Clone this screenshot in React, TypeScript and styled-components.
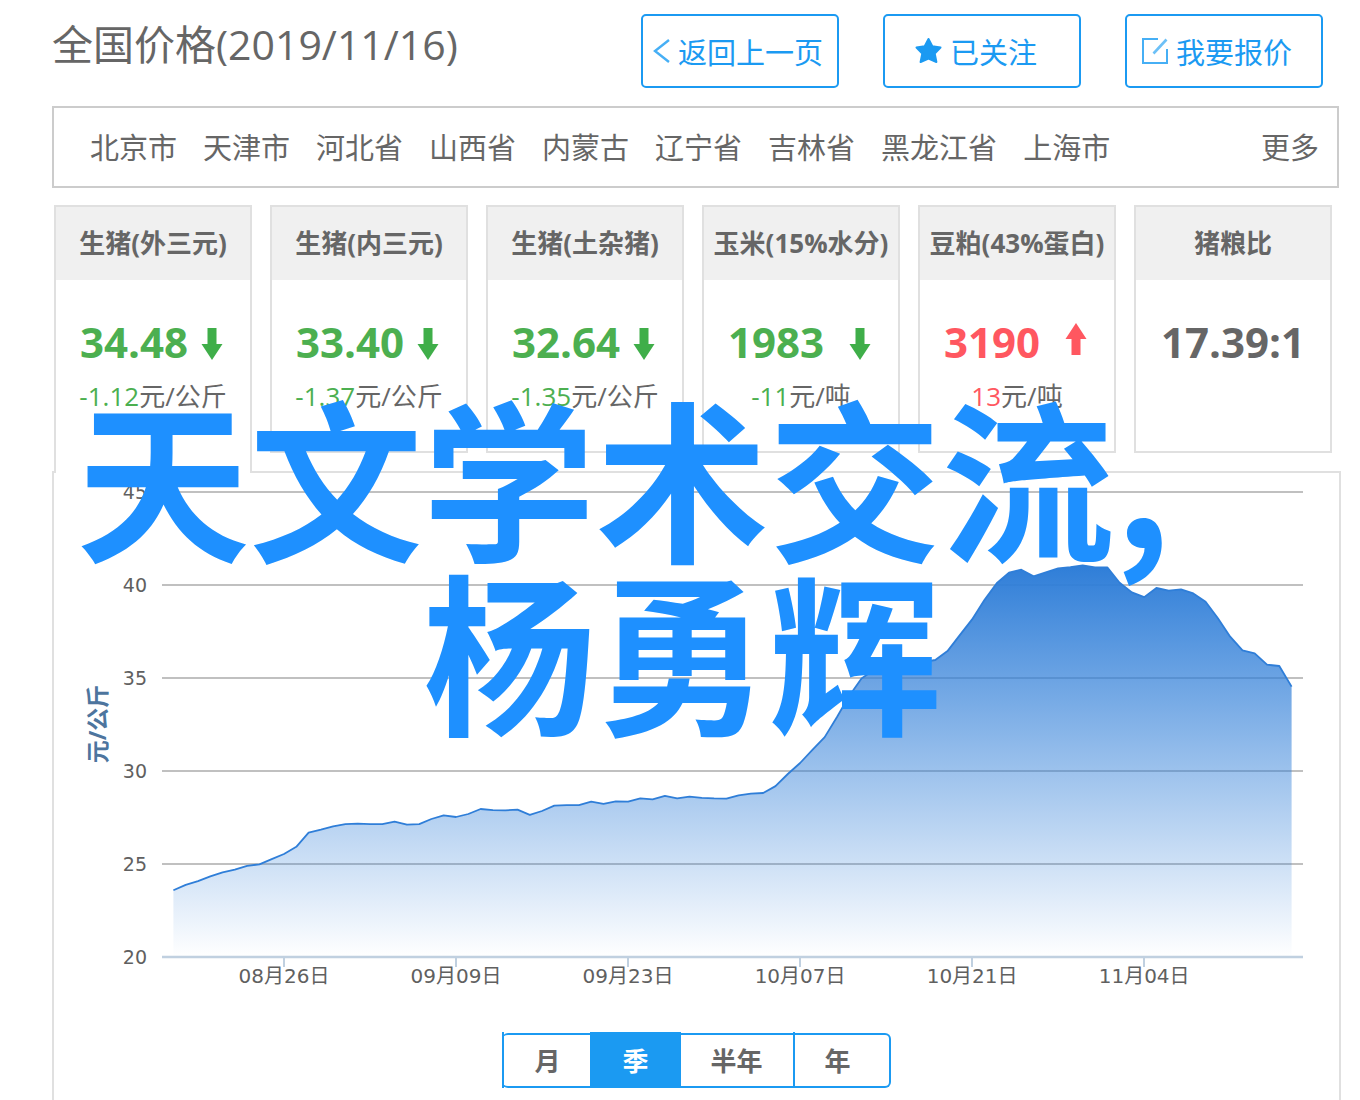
import React, { useState } from 'react';
import styled, { createGlobalStyle } from 'styled-components';

const BLUE = '#1b9af2';
const GREEN = '#4caf50';
const RED = '#ff5760';
const TEXT = '#666666';

const GlobalStyle = createGlobalStyle`
  * { box-sizing: border-box; }
  body {
    margin: 0;
    background: #fff;
    color: ${TEXT};
    font-family: 'Open Sans', 'Noto Sans CJK SC', sans-serif;
  }
  button { font-family: inherit; cursor: pointer; }
  a { color: inherit; text-decoration: none; }
`;

const Page = styled.div`
  position: relative;
  display: flex;
  flex-direction: column;
  min-height: 100vh;
  padding: 14px 19px 0 52px;
`;

const Header = styled.header`
  display: flex;
  justify-content: space-between;
  align-items: flex-start;
  padding-right: 18px;
`;

const Title = styled.h1`
  margin: 0;
  font-size: 41px;
  line-height: 60px;
  font-weight: 400;
  white-space: nowrap;
`;

const Actions = styled.div`
  display: flex;
  gap: 44px;
`;

const ActionButton = styled.button<{ $inset: number }>`
  display: flex;
  align-items: center;
  gap: 8px;
  width: 198px;
  height: 74px;
  padding: 0 0 0 ${(p) => p.$inset}px;
  border: 2px solid ${BLUE};
  border-radius: 5px;
  background: #fff;
  color: ${BLUE};
  font-size: 29px;
  white-space: nowrap;
`;

const Provinces = styled.nav`
  display: flex;
  align-items: center;
  gap: 26px;
  height: 82px;
  margin: 18px 2px 0 0;
  padding: 0 18px 2px 36px;
  border: 2px solid #cccccc;
  font-size: 29px;
  white-space: nowrap;
`;

const More = styled.a`
  margin-left: auto;
`;

const Cards = styled.section`
  display: grid;
  grid-template-columns: repeat(6, 1fr);
  gap: 18px;
  margin-top: 17px;
  padding: 0 9px 18px 2px;
`;

const Card = styled.article<{ $active?: boolean }>`
  position: relative;
  z-index: 1;
  min-height: 248px;
  margin-bottom: ${(p) => (p.$active ? '-20px' : '0')};
  border: 2px solid #e0e0e0;
  border-bottom-width: ${(p) => (p.$active ? '0' : '2px')};
  background: #fff;
`;

const CardTitle = styled.h2`
  margin: 0 0 30px;
  background: #f0f0f0;
  font-size: 26px;
  line-height: 73px;
  font-weight: 700;
  text-align: center;
  white-space: nowrap;
`;

const Price = styled.div<{ $color: string; $center?: boolean }>`
  display: flex;
  align-items: center;
  justify-content: ${(p) => (p.$center ? 'center' : 'space-between')};
  padding: ${(p) => (p.$center ? '0' : '0 27px 0 24px')};
  color: ${(p) => p.$color};
  font-size: 42px;
  line-height: 64px;
  font-weight: 700;
`;

const Change = styled.div`
  font-size: 26px;
  line-height: 44px;
  text-align: center;
  white-space: nowrap;
`;

const Delta = styled.span<{ $color: string }>`
  color: ${(p) => p.$color};
`;

const Panel = styled.section`
  display: flex;
  flex: 1;
  flex-direction: column;
  align-items: center;
  border: 2px solid #e0e0e0;
  border-bottom: 0;
`;

const Chart = styled.svg`
  display: block;
  width: 100%;
  height: auto;
`;

const AxisText = styled.text<{ $size: number }>`
  fill: #606060;
  font-family: 'DejaVu Sans', 'Noto Sans CJK SC', sans-serif;
  font-size: ${(p) => p.$size}px;
`;

const AxisTitle = styled.text`
  fill: #4d759e;
  font-family: 'Open Sans', 'Noto Sans CJK SC', sans-serif;
  font-size: 23px;
  font-weight: 700;
`;

const Periods = styled.div`
  display: flex;
  height: 55px;
  margin-top: 20px;
  border: 2px solid ${BLUE};
  border-left-width: 0;
  border-radius: 6px;
`;

const Period = styled.button<{ $active: boolean }>`
  margin: -3px 0 -2px;
  padding: 0 30px;
  border: 0 solid ${BLUE};
  border-left-width: 2px;
  background: ${(p) => (p.$active ? BLUE : 'transparent')};
  color: ${(p) => (p.$active ? '#fff' : TEXT)};
  font-size: 26px;
  font-weight: 700;
  &:last-child { padding-right: 38px; }
`;

const Watermark = styled.div`
  position: absolute;
  z-index: 2;
  top: 387px;
  left: 4px;
  right: 0;
  color: #1e90ff;
  font-family: 'Noto Sans CJK SC', sans-serif;
  font-size: 173px;
  line-height: 173px;
  font-weight: 700;
  text-align: center;
  white-space: nowrap;
  pointer-events: none;
`;

const WideComma = styled.span`
  display: inline-block;
  width: 1em;
  text-align: left;
`;

const Arrow = ({ up }: { up?: boolean }) => (
  <svg width="22" height="42" viewBox="0 0 22 42" aria-hidden="true">
    {up ? (
      <path d="M11 2 21.500 18H15.500V34H6.500V18H.5Z" fill={RED} />
    ) : (
      <path d="M6.500 7H15.500V23H21.500L11 39 .5 23H6.500Z" fill="#3fae49" />
    )}
  </svg>
);

const BackIcon = () => (
  <svg width="17" height="26" viewBox="0 0 17 26" aria-hidden="true">
    <path d="M16 2 2 13 16 24" fill="none" stroke="#46aff5" strokeWidth="2.400" />
  </svg>
);

const StarIcon = () => (
  <svg width="27" height="28" viewBox="0 0 27 28" aria-hidden="true">
    <path
      d="M13.500 2 17.300 9.300 25.500 10.500 19.700 16.500 21.400 25 13.500 21.600 5.600 25 7.300 16.500 1.500 10.500 9.700 9.300Z"
      fill={BLUE}
      stroke={BLUE}
      strokeWidth="2"
      strokeLinejoin="round"
    />
  </svg>
);

const EditIcon = () => (
  <svg width="27" height="28" viewBox="0 0 27 28" aria-hidden="true">
    <path d="M17 2H2V26H26V12" fill="none" stroke="#46aff5" strokeWidth="2" />
    <path d="M12.500 16.500 25.500 2.500" fill="none" stroke="#6cc0f7" strokeWidth="2.600" />
  </svg>
);

const provinces = ['北京市', '天津市', '河北省', '山西省', '内蒙古', '辽宁省', '吉林省', '黑龙江省', '上海市'];

type Quote = { name: string; price: string; change?: string; unit?: string; up?: boolean };

const quotes: Quote[] = [
  { name: '生猪(外三元)', price: '34.48', change: '-1.12', unit: '元/公斤' },
  { name: '生猪(内三元)', price: '33.40', change: '-1.37', unit: '元/公斤' },
  { name: '生猪(土杂猪)', price: '32.64', change: '-1.35', unit: '元/公斤' },
  { name: '玉米(15%水分)', price: '1983', change: '-11', unit: '元/吨' },
  { name: '豆粕(43%蛋白)', price: '3190', change: '13', unit: '元/吨', up: true },
  { name: '猪粮比', price: '17.39:1' },
];

const prices = [
  23.58, 23.87, 24.07, 24.33, 24.55, 24.69, 24.89, 24.98, 25.25, 25.53, 25.92, 26.68, 26.84,
  27.02, 27.14, 27.16, 27.13, 27.13, 27.27, 27.11, 27.14, 27.41, 27.61, 27.52, 27.68, 27.95,
  27.89, 27.88, 27.91, 27.63, 27.84, 28.13, 28.15, 28.16, 28.34, 28.23, 28.36, 28.34, 28.52,
  28.47, 28.66, 28.52, 28.61, 28.55, 28.52, 28.5, 28.68, 28.77, 28.81, 29.18, 29.83, 30.42,
  31.12, 31.81, 32.89, 34.02, 34.96, 35.41, 35.52, 35.63, 35.68, 35.84, 35.95, 36.43, 37.29,
  38.13, 39.17, 40.07, 40.64, 40.8, 40.44, 40.66, 40.87, 40.94, 41.03, 40.93, 40.93, 40.1,
  39.58, 39.33, 39.82, 39.67, 39.75, 39.53, 39.08, 38.19, 37.2, 36.47, 36.31, 35.7, 35.63, 34.52,
];

const ticks = [45, 40, 35, 30, 25, 20];
const dates = ['08月26日', '09月09日', '09月23日', '10月07日', '10月21日', '11月04日'];

const PLOT = { left: 108, right: 1249, first: 119.4, step: 12.288, bottom: 484, unit: 18.62 };
const yOf = (value: number) => PLOT.bottom - (value - 20) * PLOT.unit;
const xOf = (index: number) => PLOT.first + index * PLOT.step;

const line = prices.map((p, i) => `${i ? 'L' : 'M'}${xOf(i).toFixed(1)} ${yOf(p).toFixed(1)}`).join('');
const area = `${line}V${PLOT.bottom}H${PLOT.first}Z`;

const PriceChart = () => (
  <Chart viewBox="0 0 1285 540" role="img" aria-label="元/公斤">
    <defs>
      <linearGradient id="areaFill" x1="0" y1="0" x2="0" y2="1">
        <stop offset="0" stopColor="#2f7ed8" />
        <stop offset="1" stopColor="#2f7ed8" stopOpacity="0" />
      </linearGradient>
    </defs>
    {ticks.map((t) => (
      <g key={t}>
        {t > 20 && (
          <path d={`M${PLOT.left} ${Math.round(yOf(t))}H${PLOT.right}`} stroke="#c0c0c0" strokeWidth="2" />
        )}
        <AxisText $size={19} x="93" y={yOf(t) + 7} textAnchor="end">{t}</AxisText>
      </g>
    ))}
    <path d={area} fill="url(#areaFill)" />
    <path d={line} fill="none" stroke="#2f7ed8" strokeWidth="1.800" strokeLinejoin="round" />
    <path d={`M${PLOT.left} ${PLOT.bottom}H${PLOT.right}`} stroke="#c0d0e0" strokeWidth="2.400" />
    {dates.map((d, i) => {
      const x = xOf(9 + i * 14);
      return (
        <g key={d}>
          <path d={`M${Math.round(x)} ${PLOT.bottom}v10`} stroke="#c0d0e0" strokeWidth="2" />
          <AxisText $size={20} x={x} y="510" textAnchor="middle">{d}</AxisText>
        </g>
      );
    })}
    <AxisTitle transform="translate(52 251) rotate(-90)" textAnchor="middle">元/公斤</AxisTitle>
  </Chart>
);

const periods = ['月', '季', '半年', '年'];

export default function App() {
  const [period, setPeriod] = useState('季');
  return (
    <>
      <GlobalStyle />
      <Page>
        <Header>
          <Title>全国价格(2019/11/16)</Title>
          <Actions>
            <ActionButton $inset={10}><BackIcon />返回上一页</ActionButton>
            <ActionButton $inset={30}><StarIcon />已关注</ActionButton>
            <ActionButton $inset={14}><EditIcon />我要报价</ActionButton>
          </Actions>
        </Header>
        <Provinces>
          {provinces.map((p) => <a key={p} href="#">{p}</a>)}
          <More href="#">更多</More>
        </Provinces>
        <Cards>
          {quotes.map((q, i) => {
            const color = q.up ? RED : GREEN;
            return (
              <Card key={q.name} $active={i === 0}>
                <CardTitle>{q.name}</CardTitle>
                <Price $color={q.change ? color : TEXT} $center={!q.change}>
                  {q.price}
                  {q.change && <Arrow up={q.up} />}
                </Price>
                {q.change && (
                  <Change><Delta $color={color}>{q.change}</Delta>{q.unit}</Change>
                )}
              </Card>
            );
          })}
        </Cards>
        <Panel>
          <PriceChart />
          <Periods>
            {periods.map((p) => (
              <Period key={p} $active={p === period} aria-pressed={p === period} onClick={() => setPeriod(p)}>
                {p}
              </Period>
            ))}
          </Periods>
        </Panel>
        <Watermark>天文学术交流<WideComma>,</WideComma><br />杨勇辉</Watermark>
      </Page>
    </>
  );
}
